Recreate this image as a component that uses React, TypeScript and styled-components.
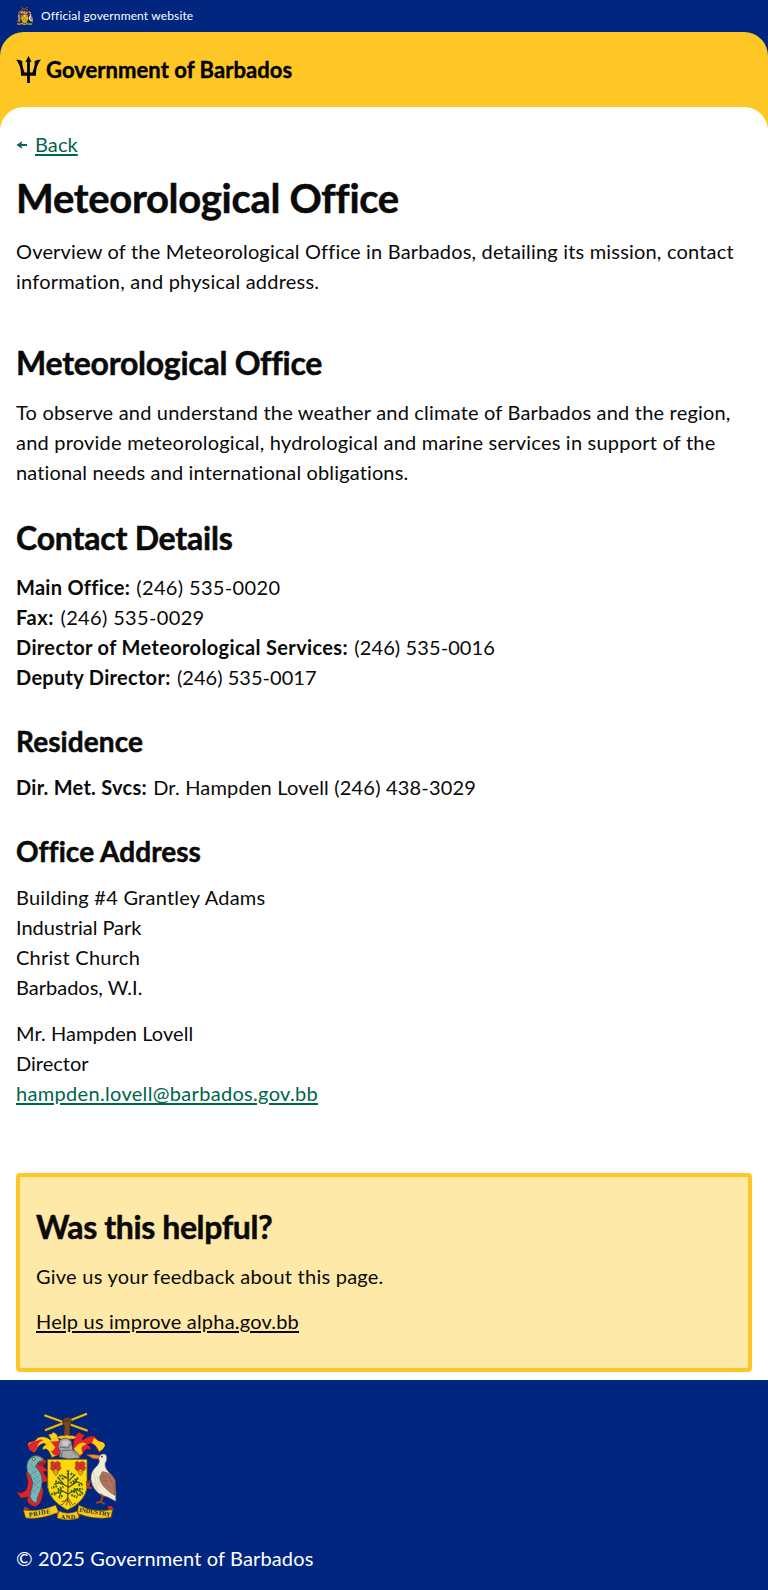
import React from "react";
import styled, { createGlobalStyle } from "styled-components";

const color = {
  navy: "#00267f",
  gold: "#ffc726",
  goldLight: "#ffe9a8",
  ink: "#0a0a0a",
  green: "#00654a",
  teal: "#0e5f64",
};

const GlobalStyle = createGlobalStyle`
  *, *::before, *::after { box-sizing: border-box; }
  body {
    margin: 0;
    background: #fff;
    color: ${color.ink};
    font-family: Lato, "Liberation Sans", sans-serif;
    font-size: 20px;
    line-height: 30px;
    font-variant-ligatures: none;
  }
  h1, h2, h3, p { margin: 0; }
  h1, h2, h3 { -webkit-text-stroke: 0.5px currentColor; }
`;

const Page = styled.div`
  display: flex;
  flex-direction: column;
  min-height: 1590px;
`;

const OfficialBar = styled.div`
  display: flex;
  align-items: center;
  gap: 8px;
  height: 32px;
  padding: 0 16px;
  background: ${color.navy};
  color: #fff;
  font-size: 12px;
  line-height: 16px;
`;

const NavyBand = styled.div`
  background: ${color.navy};
`;

const Header = styled.header`
  display: flex;
  align-items: center;
  gap: 5px;
  height: 75px;
  padding: 0 16px;
  background: ${color.gold};
  border-radius: 24px 24px 0 0;
  color: #000;
`;

const Brand = styled.span`
  font-size: 22px;
  font-weight: 700;
  line-height: 26px;
  padding-top: 1px;
  letter-spacing: 0.05px;
  -webkit-text-stroke: 0.4px currentColor;
`;

const GoldBand = styled.div`
  background: ${color.gold};
`;

const Main = styled.main`
  display: flex;
  flex-direction: column;
  padding: 22px 16px 8px;
  background: #fff;
  border-radius: 24px 24px 0 0;
`;

const BackRow = styled.div`
  display: flex;
  align-items: center;
  gap: 8px;
  height: 30px;
  margin-bottom: 14px;
`;

const Title = styled.h1`
  font-size: 40px;
  line-height: 50px;
  margin-bottom: 13px;
`;

const SectionTitle = styled.h2`
  font-size: 32px;
  line-height: 40px;
  margin-bottom: 14px;
`;

const SubTitle = styled.h3`
  font-size: 28px;
  line-height: 35px;
  margin-bottom: 13px;
`;

const Intro = styled.p`
  margin-bottom: 47px;
`;

const Article = styled.article`
  display: flex;
  flex-direction: column;
  margin-bottom: 65px;
`;

const Paragraph = styled.p<{ $after?: number }>`
  margin-bottom: ${(p) => p.$after ?? 0}px;
`;

const Line = styled.span`
  display: block;
  white-space: nowrap;
`;

const Tracked = styled.span<{ $ls: number }>`
  letter-spacing: ${(p) => p.$ls}px;
`;

const Label = styled.strong<{ $ls: number; $gap: number }>`
  letter-spacing: ${(p) => p.$ls}px;
  margin-right: ${(p) => p.$gap}px;
`;

const TextLink = styled.a<{ $ls: number; $tone: string }>`
  color: ${(p) => p.$tone};
  letter-spacing: ${(p) => p.$ls}px;
  text-decoration: underline;
  text-decoration-thickness: 2px;
  text-underline-offset: 2px;
`;

const Feedback = styled.section`
  display: flex;
  flex-direction: column;
  padding: 30px 16px 32px;
  border: 4px solid ${color.gold};
  border-radius: 4px;
  background: ${color.goldLight};
`;

const Footer = styled.footer`
  display: flex;
  flex-direction: column;
  gap: 23px;
  flex: 1;
  padding: 32px 16px 17px;
  background: ${color.navy};
  color: #fff;
`;

const Arms = styled.svg`
  display: block;
  flex: none;
`;

function Trident() {
  return (
    <svg width="25" height="27" viewBox="0 0 25 27" fill="#000" aria-hidden="true">
      <path d="M12.5 0 L15.7 6.2 L13.9 5.6 V27 H11.1 V5.6 L9.3 6.2 Z" />
      <path d="M0 3.8 C2.6 3.8 4.6 4.1 6.4 5.2 L6.2 8 C6.6 10.8 7.6 13.6 8.6 16.6 H12 V19.8 H5 C5.2 14.5 4.2 8.4 0 3.8 Z" />
      <path d="M25 3.8 C22.4 3.8 20.4 4.1 18.6 5.2 L18.8 8 C18.4 10.8 17.4 13.6 16.4 16.6 H13 V19.8 H20 C19.8 14.5 20.8 8.4 25 3.8 Z" />
    </svg>
  );
}

function BackArrow() {
  return (
    <svg width="11" height="9" viewBox="0 0 11 9" aria-hidden="true">
      <path d="M0.5 5 L6.3 1 L5.4 4 H11 V6 H5.4 L6.3 9 Z" fill={color.teal} />
    </svg>
  );
}

function CoatOfArms({ width, height }: { width: number; height: number }) {
  return (
    <Arms width={width} height={height} viewBox="48 50 302 324" preserveAspectRatio="none" role="img" aria-label="Coat of arms">
      {/* crossed sugar canes held in a fist */}
      <g stroke="#3c3210" strokeWidth="9" strokeLinecap="butt">
        <path d="M133 60 L263 106 M135 105 L261 55" />
      </g>
      <g stroke="#e3b81c" strokeWidth="6.5">
        <path d="M133 60 L263 106 M135 105 L261 55" />
      </g>
      <path d="M191 125 L193 92 L187 80 L191 68 L208 66 L214 74 L210 91 L210 125 Z" fill="#75482a" stroke="#33180c" strokeWidth="2" />
      <path d="M192 72 V82 M198 70 V82 M204 70 V82" stroke="#33180c" strokeWidth="1.5" />
      {/* mantling */}
      <path d="M176 130 C172 116 164 110 158 111 C154 122 148 112 146 119 C148 128 156 130 151 134 C142 126 130 122 116 126 C108 130 108 138 100 138 C94 140 84 140 83 149 C90 148 88 156 88 163 C92 160 96 170 101 171 C112 166 110 154 121 148 C128 144 134 144 138 147 C130 152 124 160 130 163 C138 158 144 162 149 172 C150 178 156 180 154 187 L177 178 L184 150 Z" fill="#f7cf17" stroke="#4a2a10" strokeWidth="1.5" />
      <path d="M100 138 C112 140 118 128 130 135 C118 140 112 146 112 158 L101 171 L88 163 L83 149 Z M150 136 Q164 142 180 134 L179 178 Q160 186 153 168 Q162 166 166 156 Z" fill="#e4222b" />
      <path d="M222 130 C228 116 234 110 241 111 C245 122 251 112 253 119 C250 128 244 130 248 134 C258 126 270 120 282 123 C292 128 292 136 300 138 C308 140 314 142 315 151 C308 148 308 156 308 162 C304 160 302 168 298 169 C288 164 290 152 279 147 C272 144 266 145 262 148 C270 152 276 160 270 164 C262 158 256 162 250 172 C248 180 242 182 236 187 L216 178 Z" fill="#e4222b" stroke="#4a1010" strokeWidth="1.5" />
      <path d="M282 128 C290 134 294 138 302 139 Q314 140 315 151 L308 162 L298 169 Q290 150 276 143 Z M236 146 Q248 136 260 147 Q246 150 244 160 L248 174 L236 181 L222 160 Z" fill="#f7cf17" />
      {/* helmet */}
      <ellipse cx="200" cy="126" rx="31" ry="6" fill="#f0c31c" stroke="#9b1d1d" strokeWidth="2.5" strokeDasharray="9 8" />
      <path d="M180 134 Q199 122 214 138 L218 163 L235 174 L239 188 L207 191 L178 185 L181 168 L174 155 Z" fill="#a6a7a8" stroke="#454749" strokeWidth="2" />
      <path d="M178 155 L204 158 L213 145 M184 166 L215 164 L231 181 M187 170 L183 185" fill="none" stroke="#55585b" strokeWidth="2.5" />
      <path d="M187 139 Q197 132 207 139 L204 151 L188 151 Z" fill="#cacaca" />
      {/* dolphin */}
      <path d="M91 187 Q105 172 127 185 L140 199 L129 213 L146 226 L130 230 L147 258 L121 263 Q134 280 128 300 Q124 328 106 334 Q88 332 80 314 L85 305 L63 309 L49 290 L64 292 L79 284 L84 260 L78 235 L86 211 Z" fill="#d6252e" stroke="#451518" strokeWidth="1.5" />
      <path d="M84 197 Q98 173 121 185 L132 194 L116 199 L106 214 Q128 232 126 262 Q124 282 116 298 Q108 312 112 322 Q94 322 90 303 Q94 281 99 263 Q94 242 82 228 Q78 210 84 197 Z" fill="#77b7b8" stroke="#285466" strokeWidth="2" />
      <path d="M91 205 L110 233 M86 215 L118 251 M93 239 L117 265 M98 258 L115 280 M95 281 L109 292 M113 226 L90 238 M120 239 L98 255 M120 255 L96 277 M116 275 L94 296" stroke="#397b86" strokeWidth="2" strokeDasharray="4 3" />
      <circle cx="101" cy="191" r="4.5" fill="#f1e85d" stroke="#1b2024" strokeWidth="2" />
      <path d="M113 202 L137 199 L128 214 L112 209 Z" fill="#a51f28" />
      {/* shield */}
      <path d="M143 192 H261 V277 Q255 319 202 344 Q150 317 143 276 Z" fill="#fcd90d" stroke="#775f0c" strokeWidth="2.5" />
      {[150, 224].map((x) => (
        <g key={x} transform={`translate(${x} 198)`}>
          <path d="M2 3 L8 0 L15 4 L23 0 L31 5 L30 14 L33 21 L27 29 L18 24 L8 29 L1 22 L3 13 Z" fill="#dd3429" stroke="#8b2818" strokeWidth="1.5" />
          <path d="M5 8 L27 22 M27 7 L7 22 M16 4 V23" stroke="#a83020" strokeWidth="1.5" />
          <path d="M9 27 L16 31 L24 27 L24 37 L17 43 L11 36 Z" fill="#e7a316" stroke="#946b10" strokeWidth="2" />
        </g>
      ))}
      {/* bearded fig tree */}
      <path d="M205 226 L203 319 M204 250 L184 238 M204 258 L226 237 M204 274 L178 262 L162 267 M204 277 L231 259 L246 266 M203 295 L181 283 L162 300 M205 296 L229 281 L248 293 M193 269 L176 249 M216 269 L232 251 M184 285 L179 303 M226 283 L235 301" fill="none" stroke="#514710" strokeWidth="3.5" />
      <path d="M202 307 L189 327 L181 329 M204 309 L199 330 M205 309 L217 328 L227 323 M203 315 L185 319 M205 316 L212 333" fill="none" stroke="#6c4618" strokeWidth="2.5" />
      <g fill="none" stroke="#2c6424" strokeWidth="7" strokeDasharray="5 3">
        <path d="M204 225 V246 M182 240 L171 252 M186 251 L198 243 M212 235 L223 240 M235 248 L222 255" />
        <path d="M166 258 L184 264 M171 272 L154 278 M173 283 L190 274 M211 263 L224 256 M248 267 L233 270 M221 282 L248 281" />
        <path d="M154 297 L166 292 M174 293 L186 286 M212 287 L228 291 M238 300 L249 294 M176 307 L190 300 M214 299 L232 306" />
      </g>
      {/* pelican */}
      <path d="M259 178 Q276 176 300 180 L307 191 L280 190 Z" fill="#f18a35" stroke="#8a3924" strokeWidth="2" />
      <path d="M299 181 Q306 173 316 177 Q325 188 315 205 Q313 221 338 242 Q349 262 347 318 L323 305 L306 300 Q278 285 273 253 Q271 228 291 212 Q302 201 296 189 Z" fill="#f1ecd9" stroke="#84716b" strokeWidth="2" />
      <path d="M307 229 Q334 232 346 255 L345 300 Q331 293 320 282 Q300 264 299 246 Z" fill="#b47460" stroke="#63443e" strokeWidth="2" />
      <path d="M307 235 L319 246 L305 243 L322 259 L307 253 L334 282 M317 237 L343 265 M328 245 L345 287" fill="none" stroke="#8b5a4d" strokeWidth="2" />
      <path d="M281 230 L291 280 M290 242 L300 277 M279 260 L296 288" stroke="#d8cc90" strokeWidth="2" />
      <circle cx="306" cy="184" r="2.5" fill="#20191a" />
      <path d="M276 279 L263 276 L260 257 M265 276 L269 255 M302 296 L308 304 L302 319 L289 323 M302 319 L314 326" fill="none" stroke="#a83e21" strokeWidth="6" />
      {/* motto ribbon */}
      <path d="M71 334 L84 337 L90 349 L74 354 Z M323 333 L336 332 L341 345 L326 353 Z M164 344 L180 348 L173 365 Z M229 348 L243 344 L240 365 Z" fill="#c92b2b" />
      <path d="M70 344 Q117 351 167 329 L176 351 Q120 374 77 368 Z M176 347 Q204 360 233 347 L237 368 Q204 380 171 368 Z M236 329 Q275 352 338 343 L333 366 Q282 375 232 354 Z" fill="#f3cb20" stroke="#6e4b0c" strokeWidth="2" />
      <g fill="#2a2410" fontFamily="Liberation Serif, serif" fontSize="19" fontWeight="700">
        <text x="88" y="365" textLength="65" transform="rotate(-10 88 365)">PRIDE</text>
        <text x="182" y="370" textLength="44">AND</text>
        <text x="237" y="349" textLength="95" transform="rotate(9 237 349)">INDUSTRY</text>
      </g>
    </Arms>
  );
}

const contacts = [
  { label: "Main Office:", ls: 0.28, gap: 1, value: "(246) 535-0020", vls: 0.35 },
  { label: "Fax:", ls: 0.6, gap: 1.2, value: "(246) 535-0029", vls: 0.35 },
  { label: "Director of Meteorological Services:", ls: 0.36, gap: 1.2, value: "(246) 535-0016", vls: 0.1 },
  { label: "Deputy Director:", ls: 0.3, gap: 1.2, value: "(246) 535-0017", vls: 0.03 },
];

const address = [
  { text: "Building #4 Grantley Adams", ls: 0.25 },
  { text: "Industrial Park", ls: -0.02 },
  { text: "Christ Church", ls: 0.25 },
  { text: "Barbados, W.I.", ls: 0 },
];

export default function App() {
  return (
    <Page>
      <GlobalStyle />
      <OfficialBar>
        <CoatOfArms width={17} height={18} />
        <Tracked $ls={0.14}>Official government website</Tracked>
      </OfficialBar>
      <NavyBand>
        <Header>
          <Trident />
          <Brand>Government of Barbados</Brand>
        </Header>
      </NavyBand>
      <GoldBand>
        <Main>
          <BackRow>
            <BackArrow />
            <TextLink href="#" $ls={0.1} $tone={color.green}>Back</TextLink>
          </BackRow>
          <Title><Tracked $ls={-0.3}>Meteorological Office</Tracked></Title>
          <Intro>
            <Line><Tracked $ls={0.185}>Overview of the Meteorological Office in Barbados, detailing its mission, contact</Tracked></Line>
            <Line><Tracked $ls={0.22}>information, and physical address.</Tracked></Line>
          </Intro>
          <Article>
            <SectionTitle><Tracked $ls={-0.25}>Meteorological Office</Tracked></SectionTitle>
            <Paragraph $after={31}>
              <Line><Tracked $ls={0.19}>To observe and understand the weather and climate of Barbados and the region,</Tracked></Line>
              <Line><Tracked $ls={0.215}>and provide meteorological, hydrological and marine services in support of the</Tracked></Line>
              <Line><Tracked $ls={0.14}>national needs and international obligations.</Tracked></Line>
            </Paragraph>
            <SectionTitle><Tracked $ls={-0.2}>Contact Details</Tracked></SectionTitle>
            <Paragraph $after={32}>
              {contacts.map((c) => (
                <Line key={c.label}>
                  <Label $ls={c.ls} $gap={c.gap}>{c.label}</Label>{" "}
                  <Tracked $ls={c.vls}>{c.value}</Tracked>
                </Line>
              ))}
            </Paragraph>
            <SubTitle><Tracked $ls={0.09}>Residence</Tracked></SubTitle>
            <Paragraph $after={32}>
              <Line>
                <Label $ls={0.26} $gap={1.2}>Dir. Met. Svcs:</Label>{" "}
                <Tracked $ls={0.18}>Dr. Hampden Lovell (246) 438-3029</Tracked>
              </Line>
            </Paragraph>
            <SubTitle><Tracked $ls={0.05}>Office Address</Tracked></SubTitle>
            <Paragraph $after={16}>
              {address.map((a) => (
                <Line key={a.text}><Tracked $ls={a.ls}>{a.text}</Tracked></Line>
              ))}
            </Paragraph>
            <Paragraph>
              <Line><Tracked $ls={0.07}>Mr. Hampden Lovell</Tracked></Line>
              <Line><Tracked $ls={0}>Director</Tracked></Line>
              <Line><TextLink href="#" $ls={0.32} $tone={color.green}>hampden.lovell@barbados.gov.bb</TextLink></Line>
            </Paragraph>
          </Article>
          <Feedback>
            <SectionTitle><Tracked $ls={-0.38}>Was this helpful?</Tracked></SectionTitle>
            <Paragraph $after={15}><Tracked $ls={0.24}>Give us your feedback about this page.</Tracked></Paragraph>
            <Paragraph><TextLink href="#" $ls={0.2} $tone={color.ink}>Help us improve alpha.gov.bb</TextLink></Paragraph>
          </Feedback>
        </Main>
      </GoldBand>
      <Footer>
        <CoatOfArms width={100.7} height={108} />
        <Paragraph><Tracked $ls={0.14}>© 2025 Government of Barbados</Tracked></Paragraph>
      </Footer>
    </Page>
  );
}
